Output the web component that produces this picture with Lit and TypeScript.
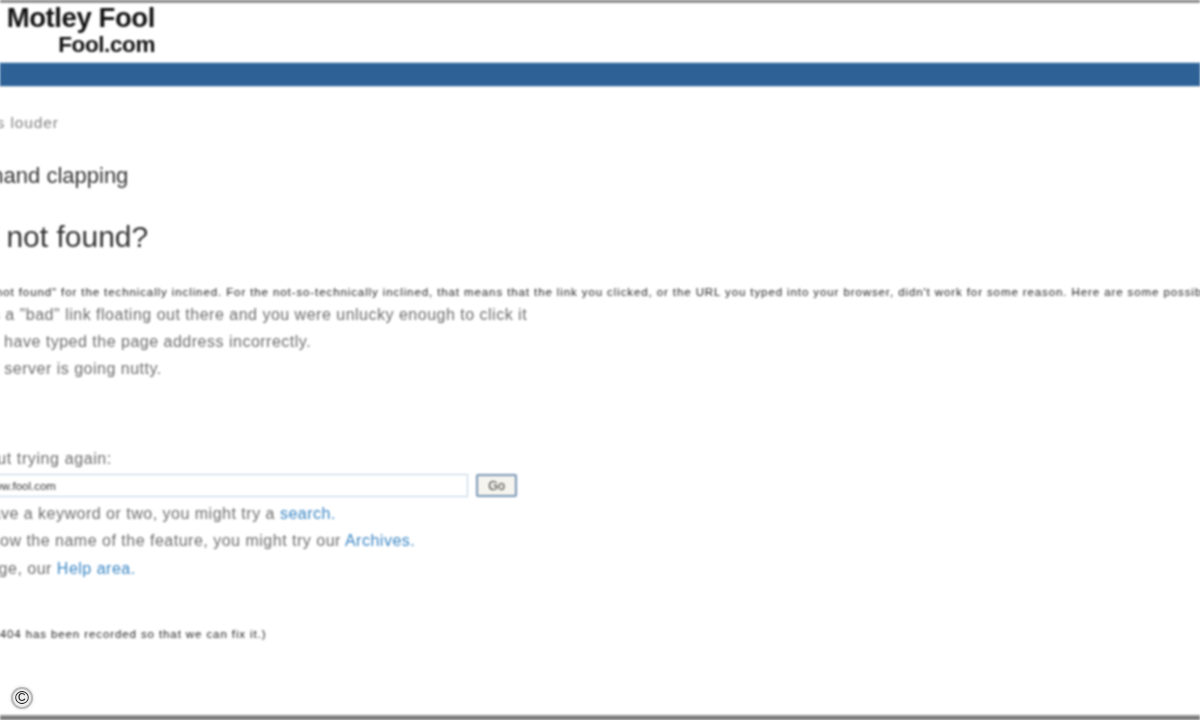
import { LitElement, html, css } from "lit";
import { customElement } from "lit/decorators.js";

@customElement("app-root")
export class AppRoot extends LitElement {
  static styles = css`
    :host { display: block; width: 1200px; height: 720px; overflow: hidden; position: relative; background: #fff; font-family: "Liberation Sans", Arial, sans-serif; }
    .frame { display: flex; flex-direction: column; height: 720px; filter: blur(0.9px); }
    .top-edge { height: 3px; flex: none; background: linear-gradient(#666, #aaa); }
    .logo { height: 60px; flex: none; box-sizing: border-box; width: 155px; display: flex; flex-direction: column; align-items: flex-end; padding-top: 1px; color: #111; font-weight: 700; letter-spacing: -0.4px; }
    .logo .a { font-size: 27.5px; line-height: 28px; }
    .logo .b { font-size: 22.5px; line-height: 24px; margin-top: 1px; }
    .bar { height: 23px; flex: none; background: #2e6296; box-shadow: 0 0 0 1px #c9d9e8; }
    .main { flex: 1; white-space: nowrap; padding-top: 28px; color: #666; }
    .tag { font-size: 15.5px; letter-spacing: 0.9px; line-height: 18px; color: #808080; margin-left: -103px; }
    .sub { font-size: 22px; line-height: 26px; color: #333; margin-top: 31px; margin-left: -186px; }
    h1 { font-size: 30px; line-height: 34px; font-weight: 400; color: #333; margin: 31px 0 0 -72px; }
    .fine { font-size: 11.5px; letter-spacing: 0.9px; line-height: 14px; color: #222; margin-top: 31px; margin-left: -35px; }
    .item { font-size: 16px; letter-spacing: 0.5px; line-height: 27px; color: #6c6c6c; }
    .i1 { margin-top: 2px; margin-left: -56px; }
    .i2 { margin-left: -66px; }
    .i3 { margin-left: -49px; }
    .try { font-size: 16px; letter-spacing: 0.6px; line-height: 20px; color: #6c6c6c; margin-top: 67px; margin-left: -76px; }
    .search { display: flex; gap: 8px; margin-top: 5px; height: 23px; margin-left: -60px; }
    input { box-sizing: border-box; width: 528px; height: 23px; border: 1px solid #bcd0e4; padding: 0 0 0 44px; margin: 0; font: 11.5px "Liberation Sans", Arial, sans-serif; color: #333; background: #fff; outline: none; }
    button { box-sizing: border-box; width: 41px; height: 23px; padding: 0; border: 2px solid #7796b6; border-radius: 2px; background: #f6f4ee; font: 12.5px "Liberation Sans", Arial, sans-serif; color: #333; }
    .links { font-size: 16px; letter-spacing: 0.5px; line-height: 27.3px; color: #6c6c6c; margin-top: 3px; margin-left: -65px; }
    a { color: #3a86c4; text-decoration: none; }
    .note { font-size: 11.5px; letter-spacing: 0.9px; line-height: 14px; color: #222; margin-top: 45px; margin-left: -36px; }
    .bottom-edge { height: 5px; flex: none; background: linear-gradient(#999, #666); }
    .badge { position: absolute; left: 13px; top: 689px; width: 18px; height: 18px; border-radius: 50%; background: #eee; box-shadow: 0 0 0 2px #bbb, 0 0 3px 2px #ccc; display: flex; align-items: center; justify-content: center; font-size: 19px; line-height: 18px; color: #222; filter: blur(0.4px); }
  `;

  render() {
    return html`
      <div class="frame">
        <div class="top-edge"></div>
        <div class="logo"><span class="a">Motley Fool</span><span class="b">Fool.com</span></div>
        <div class="bar"></div>
        <div class="main">
          <div class="tag">Action speaks louder</div>
          <div class="sub">The sound of one hand clapping</div>
          <h1>Page not found?</h1>
          <div class="fine">"404 not found" for the technically inclined. For the not-so-technically inclined, that means that the link you clicked, or the URL you typed into your browser, didn't work for some reason. Here are some possible</div>
          <div class="item i1">There's a "bad" link floating out there and you were unlucky enough to click it</div>
          <div class="item i2">You may have typed the page address incorrectly.</div>
          <div class="item i3">Or our server is going nutty.</div>
          <div class="try">What about trying again:</div>
          <div class="search"><input value="www.fool.com" /><button>Go</button></div>
          <div class="links">
            <div>If you have a keyword or two, you might try a <a>search.</a></div>
            <div>If you know the name of the feature, you might try our <a>Archives.</a></div>
            <div>For a page, our <a>Help area.</a></div>
          </div>
          <div class="note">(Your 404 has been recorded so that we can fix it.)</div>
        </div>
        <div class="bottom-edge"></div>
      </div>
      <div class="badge">©</div>
    `;
  }
}
